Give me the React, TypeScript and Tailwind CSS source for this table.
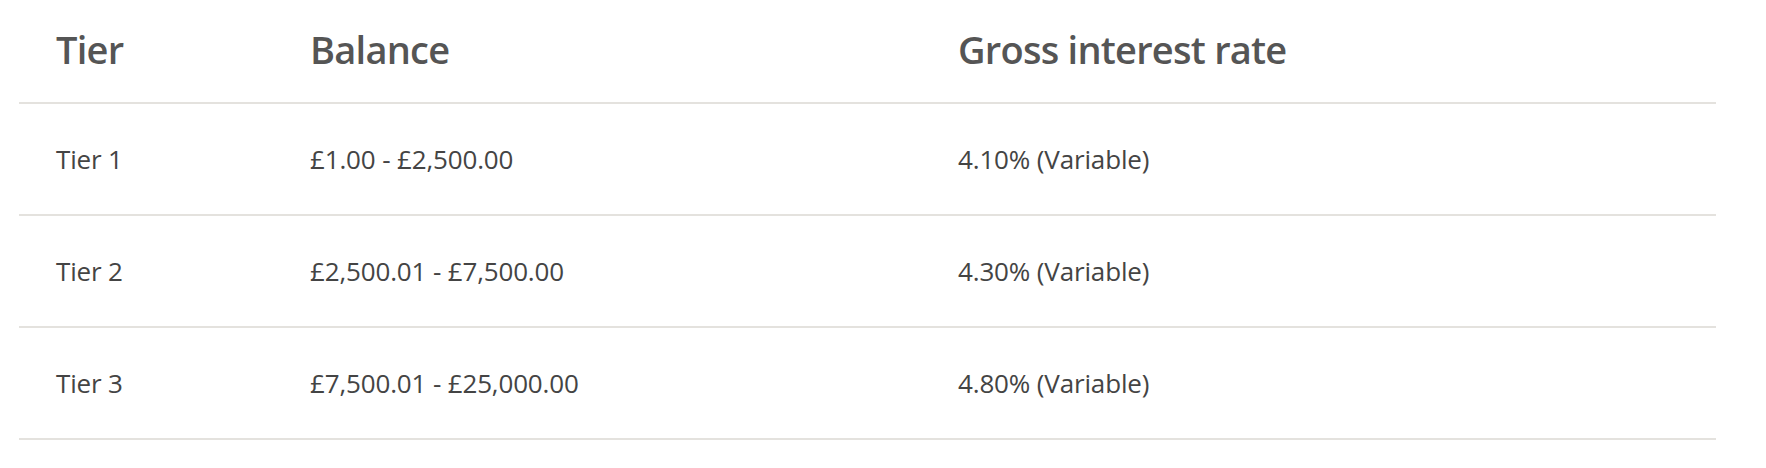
const rows = [
  { tier: "Tier 1", balance: "£1.00 - £2,500.00", rate: "4.10% (Variable)" },
  { tier: "Tier 2", balance: "£2,500.01 - £7,500.00", rate: "4.30% (Variable)" },
  { tier: "Tier 3", balance: "£7,500.01 - £25,000.00", rate: "4.80% (Variable)" },
];

const grid = "grid grid-cols-[254px_648px_1fr] border-b-2 border-[#e4e2de]";

export default function App() {
  return (
    <div className="w-[1766px] h-[468px] bg-white font-['Open_Sans',sans-serif]">
      <div className="ml-[19px] w-[1697px]">
        <div className={`${grid} h-[104px] items-center pb-[3px] text-[38px] tracking-[-0.75px] font-semibold text-[#555555]`}>
          <div className="pl-[37px]">Tier</div>
          <div className="pl-[37px]">Balance</div>
          <div className="pl-[37px]">Gross interest rate</div>
        </div>
        {rows.map((r) => (
          <div key={r.tier} className={`${grid} h-[112px] items-center text-[26px] tracking-[-0.15px] text-[#444444]`}>
            <div className="pl-[37px]">{r.tier}</div>
            <div className="pl-[37px]">{r.balance}</div>
            <div className="pl-[37px]">{r.rate}</div>
          </div>
        ))}
      </div>
    </div>
  );
}
